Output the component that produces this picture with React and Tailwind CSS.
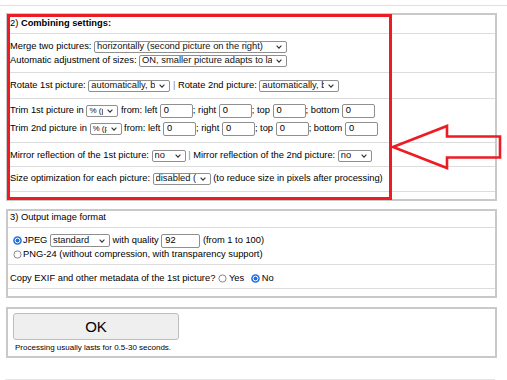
function Chevron() {
  return (
    <svg className="ml-[4px] mr-[4px] h-[4px] w-[6px] shrink-0" viewBox="0 0 6 4" fill="none">
      <path d="M0.6 0.6L3 3.2L5.4 0.6" stroke="#333" strokeWidth="1.1" />
    </svg>
  );
}

function Select({ className = '', children }) {
  return (
    <span
      className={`inline-flex items-center overflow-hidden rounded-[2px] border border-[#8f8f8f] bg-white pl-[2px] align-middle leading-none text-[#111] ${className}`}
    >
      <span className="min-w-0 flex-1 overflow-hidden whitespace-nowrap">{children}</span>
      <Chevron />
    </span>
  );
}

function Field({ value = '0', className = 'w-[33px]' }) {
  return (
    <span
      className={`inline-flex h-[14px] items-center rounded-[2px] border border-[#8f8f8f] bg-white pl-[3px] align-middle leading-none ${className}`}
    >
      {value}
    </span>
  );
}

function Radio({ checked, className = '' }) {
  return (
    <svg className={`inline-block h-[9px] w-[9px] align-middle ${className}`} viewBox="0 0 9 9">
      {checked ? (
        <>
          <circle cx="4.5" cy="4.5" r="4.3" fill="#1d6fe6" />
          <circle cx="4.5" cy="4.5" r="2.4" fill="#1d6fe6" stroke="#fff" strokeWidth="1" />
        </>
      ) : (
        <circle cx="4.5" cy="4.5" r="3.6" fill="#fff" stroke="#7a7a7a" strokeWidth="0.9" />
      )}
    </svg>
  );
}

const Row = ({ children }) => (
  <div className="h-[14px] whitespace-nowrap leading-[14px]">{children}</div>
);

const Bar = () => <span className="text-[#8a8a8a]">|</span>;

export default function App() {
  return (
    <div className="relative h-[380px] w-[507px] overflow-hidden bg-white font-['Liberation_Sans',Arial,sans-serif] text-[9.33px] text-black">
      <div className="mt-[5px] h-px w-full bg-[#e0e0e0]" />

      {/* 2) Combining settings */}
      <div className="ml-[6px] mt-[7px] h-[188px] w-[491px] border-2 border-[#c9c9c9]">
        <div className="h-[19px] border-b border-[#dcdcdc] px-[2px] pt-[1px]">
          <Row>
            2) <b>Combining settings:</b>
          </Row>
        </div>
        <div className="h-[39px] border-b border-[#dcdcdc] px-[2px] pt-[5px]">
          <Row>
            Merge two pictures:{' '}
            <Select className="h-[12px] w-[193px]">horizontally (second picture on the right)</Select>
          </Row>
          <Row>
            Automatic adjustment of sizes:{' '}
            <Select className="h-[12px] w-[148px]">ON, smaller picture adapts to larger</Select>
          </Row>
        </div>
        <div className="h-[26px] border-b border-[#dcdcdc] px-[2px] pt-[5px]">
          <Row>
            Rotate 1st picture: <Select className="h-[12px] w-[82px]">automatically, by EXIF</Select>{' '}
            <Bar /> Rotate 2nd picture:{' '}
            <Select className="h-[12px] w-[80px]">automatically, by EXIF</Select>
          </Row>
        </div>
        <div className="h-[44px] border-b border-[#dcdcdc] px-[2px] pt-[4px]">
          <Row>
            Trim 1st picture in <Select className="h-[12px] w-[32px] text-[8px]">% (percent)</Select> from:
            left <Field />; right <Field />; top <Field />; bottom <Field />
          </Row>
          <div className="h-[4px]" />
          <Row>
            Trim 2nd picture in <Select className="h-[12px] w-[32px] text-[8px]">% (percent)</Select> from:
            left <Field />; right <Field />; top <Field />; bottom <Field />
          </Row>
        </div>
        <div className="h-[24px] border-b border-[#dcdcdc] px-[2px] pt-[5px]">
          <Row>
            Mirror reflection of the 1st picture: <Select className="h-[12px] w-[34px]">no</Select>{' '}
            <Bar /> Mirror reflection of the 2nd picture:{' '}
            <Select className="h-[12px] w-[34px]">no</Select>
          </Row>
        </div>
        <div className="h-[25px] border-b border-[#dcdcdc] px-[2px] pt-[4px]">
          <Row>
            Size optimization for each picture:{' '}
            <Select className="h-[12px] w-[58px]">disabled (default)</Select> (to reduce size in pixels after
            processing)
          </Row>
        </div>
      </div>

      {/* 3) Output image format */}
      <div className="ml-[6px] mt-[8px] h-[89px] w-[491px] border-2 border-[#c9c9c9]">
        <div className="h-[17px] border-b border-[#dcdcdc] px-[2px]">
          <div className="h-[13px] whitespace-nowrap leading-[13px]">3) Output image format</div>
        </div>
        <div className="h-[37px] border-b border-[#dcdcdc] px-[2px] pt-[5px]">
          <Row>
            <Radio checked className="ml-[3px] mr-px" />
            JPEG <Select className="h-[13px] w-[60px]">standard</Select> with quality{' '}
            <Field value="92" className="w-[39px]" /> (from 1 to 100)
          </Row>
          <Row>
            <Radio className="ml-[3px] mr-px" />
            PNG-24 (without compression, with transparency support)
          </Row>
        </div>
        <div className="h-[24px] border-b border-[#dcdcdc] px-[2px] pt-[6px]">
          <Row>
            Copy EXIF and other metadata of the 1st picture? <Radio className="mr-[2px]" />
            Yes <Radio checked className="ml-[4px] mr-[2px]" />
            No
          </Row>
        </div>
      </div>

      {/* Submit */}
      <div className="ml-[6px] mt-[9px] h-[51px] w-[491px] border-2 border-[#c9c9c9] pl-[5px] pt-[4px]">
        <button
          type="button"
          className="flex h-[27px] w-[166px] items-center justify-center rounded-[3px] border border-[#bdbdbd] bg-[#efefef] text-[15px] leading-none"
        >
          OK
        </button>
        <div className="ml-[2px] mt-[3px] text-[8px] leading-[10px]">
          Processing usually lasts for 0.5-30 seconds.
        </div>
      </div>

      <div className="ml-[5px] mt-[21px] h-px w-[490px] bg-[#e6e6e6]" />

      {/* annotation */}
      <div className="pointer-events-none absolute left-[7px] top-[14px] h-[186px] w-[385px] border-[3px] border-[#ed1c24]" />
      <svg className="pointer-events-none absolute left-0 top-0 h-[380px] w-[507px]" viewBox="0 0 507 380" fill="none">
        <polygon
          points="393,147 447,126 447,136.5 500,136.5 500,157.5 447,157.5 447,168"
          stroke="#ed1c24"
          strokeWidth="2.6"
          strokeLinejoin="miter"
        />
      </svg>
    </div>
  );
}
